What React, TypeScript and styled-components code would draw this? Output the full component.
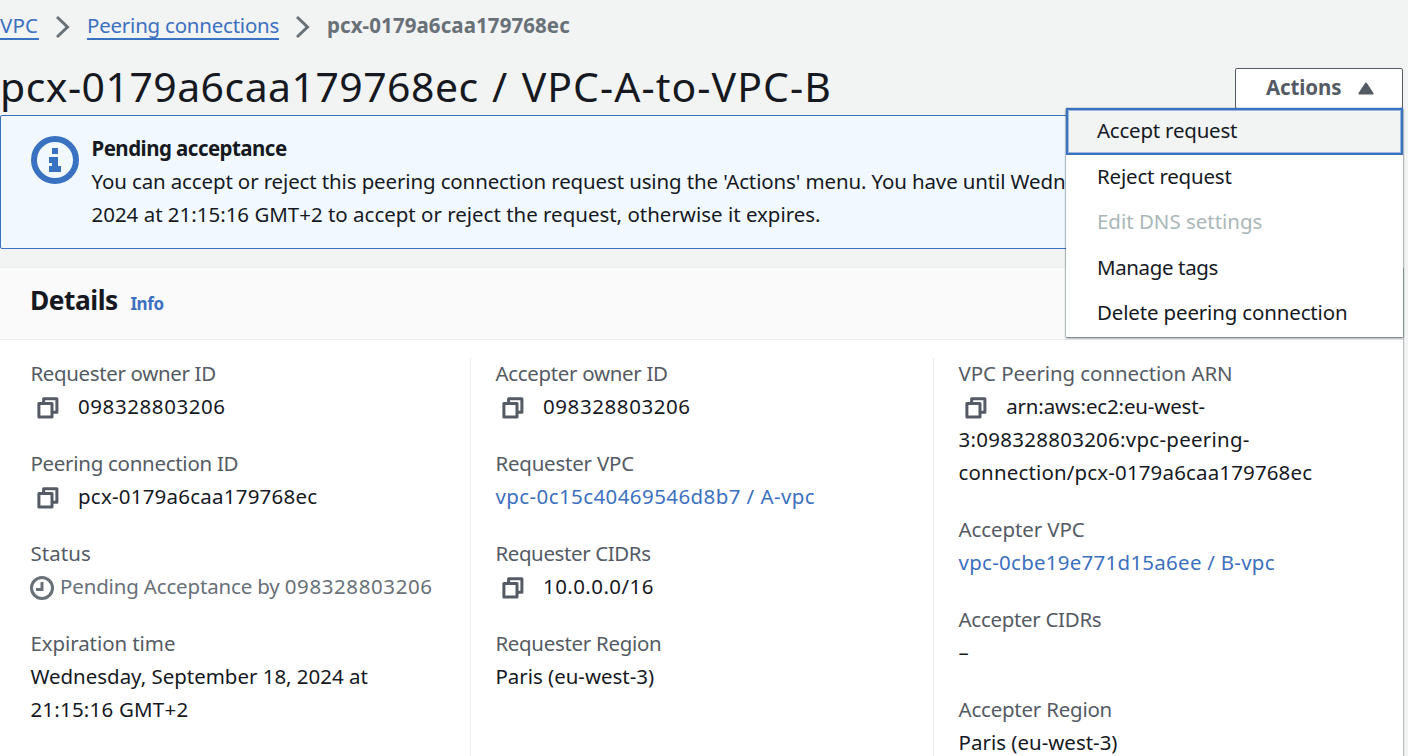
import React from 'react';
import styled, { createGlobalStyle } from 'styled-components';

const Global = createGlobalStyle`
  *, *::before, *::after { box-sizing: border-box; }
  body {
    margin: 0;
    background: #f2f3f3;
    color: #16191f;
    font-family: "Noto Sans", sans-serif;
    font-size: 20.475px;
    line-height: 33px;
    overflow: hidden;
  }
`;

const Page = styled.main`
  display: flex;
  flex-direction: column;
  width: 1408px;
  height: 756px;
  overflow: hidden;
`;

const Text = styled.span<{ $track?: number; $gap?: number }>`
  letter-spacing: ${(p) => p.$track ?? 0}px;
  word-spacing: ${(p) => p.$gap ?? 0}px;
  white-space: pre;
`;

const Breadcrumbs = styled.nav`
  display: flex;
  flex: none;
  align-items: flex-start;
  height: 68px;
  padding-top: 14px;
  line-height: 22px;
`;

const Crumb = styled.a<{ $track: number; $width: number }>`
  width: ${(p) => p.$width}px;
  padding-bottom: 2px;
  border-bottom: 2px solid #3972c0;
  color: #3c70c0;
  letter-spacing: ${(p) => p.$track}px;
  white-space: nowrap;
`;

const CurrentCrumb = styled(Text)`
  color: #687078;
  font-weight: 700;
`;

const ChevronSlot = styled.svg`
  width: 14px;
  height: 24px;
  margin: 1px 17px 0 17px;
  fill: none;
  stroke: #687078;
  stroke-width: 3;
`;

const TitleBar = styled.header`
  display: flex;
  flex: none;
  justify-content: space-between;
  width: 1403px;
  height: 47px;
`;

const Title = styled.h1`
  margin: 0;
  font-size: 40.95px;
  font-weight: 400;
  line-height: 36px;
  white-space: nowrap;
`;

const Actions = styled.div`
  position: relative;
  width: 168px;
`;

const ActionsButton = styled.button`
  display: flex;
  align-items: center;
  width: 168px;
  height: 41px;
  padding: 0 0 3px 30px;
  border: 1px solid #545b64;
  border-radius: 2px;
  background: #fff;
  color: #545b64;
  font: 700 20.475px/33px "Noto Sans", sans-serif;
`;

const Caret = styled.svg`
  width: 16px;
  height: 13px;
  margin: 3px 0 0 17px;
  fill: #545b64;
  stroke: #545b64;
  stroke-width: 2;
  stroke-linejoin: round;
`;

const Menu = styled.ul`
  position: absolute;
  z-index: 2;
  top: 40px;
  right: 0;
  width: 337px;
  height: 229px;
  margin: 0;
  padding: 0;
  list-style: none;
  background: #fff;
  box-shadow: 0 1px 2px 0 rgba(0, 28, 36, 0.65), 0 0 1px 0 rgba(0, 28, 36, 0.5);
`;

const MenuItem = styled.li<{ $active?: boolean; $disabled?: boolean; $track: number }>`
  height: ${(p) => (p.$active ? 46.75 : 45.5)}px;
  padding: ${(p) => (p.$active ? '4px 0 0 29px' : '5px 0 0 31px')};
  border: ${(p) => (p.$active ? '2px solid #3972c0' : '0')};
  box-shadow: ${(p) => (p.$active ? 'inset 0 0 0 1px #9db8de' : 'none')};
  background: ${(p) => (p.$active ? '#f2f3f3' : 'transparent')};
  color: ${(p) => (p.$disabled ? '#aab7b8' : '#16191f')};
  letter-spacing: ${(p) => p.$track}px;
  white-space: nowrap;
`;

const Banner = styled.section`
  display: flex;
  flex: none;
  width: 1403px;
  height: 134px;
  padding: 16px 0 0 30px;
  border: 1px solid #3972c0;
  border-radius: 2px;
  background: #f1f9ff;
`;

const InfoIcon = styled.svg`
  flex: none;
  width: 48px;
  height: 48px;
  margin: 4px 12.5px 0 0;
`;

const BannerText = styled.div`
  display: flex;
  flex-direction: column;
`;

const BannerTitle = styled(Text)`
  font-weight: 700;
`;

const Panel = styled.section`
  display: flex;
  flex: 1;
  flex-direction: column;
  width: 1403px;
  margin-top: 18px;
  background: #fff;
  border-top: 1px solid #eaeded;
  box-shadow: 0 1px 1px 0 rgba(0, 28, 36, 0.3), 1px 1px 1px 0 rgba(0, 28, 36, 0.2);
`;

const PanelHeader = styled.header`
  display: flex;
  align-items: baseline;
  gap: 12.5px;
  height: 72px;
  padding: 14.5px 30px 0;
  border-bottom: 1px solid #eaeded;
  background: #fafafa;
`;

const PanelTitle = styled.h2`
  margin: 0;
  font-size: 26.3px;
  font-weight: 700;
  line-height: 35px;
  letter-spacing: -0.45px;
`;

const InfoLink = styled.a`
  color: #3c70c0;
  font-size: 17px;
  font-weight: 700;
  letter-spacing: -0.4px;
`;

const Columns = styled.div`
  display: grid;
  grid-template-columns: 440px 463px 1fr;
  flex: 1;
  padding: 18px 0 0 30px;
`;

const Column = styled.dl<{ $inset: number }>`
  display: flex;
  flex-direction: column;
  gap: 24px;
  margin: 0;
  padding-left: ${(p) => p.$inset}px;
  border-left: ${(p) => (p.$inset > 1 ? '1px solid #eaeded' : '0')};
`;

const Field = styled.div`
  margin: -1px 0 1px;
`;

const Label = styled.dt<{ $track: number }>`
  color: #545b64;
  letter-spacing: ${(p) => p.$track}px;
  white-space: nowrap;
`;

const Value = styled.dd<{ $tone?: 'link' | 'muted' }>`
  display: flex;
  flex-direction: column;
  margin: 0;
  color: ${(p) => (p.$tone === 'link' ? '#3c70c0' : p.$tone === 'muted' ? '#687078' : '#16191f')};
`;

const Row = styled.div`
  display: flex;
  align-items: flex-start;
  height: 33px;
`;

const CopySvg = styled.svg`
  flex: none;
  width: 24px;
  height: 24px;
  margin: 6px 18px 0 5.6px;
  fill: none;
  stroke: #545b64;
  stroke-width: 3;
  stroke-linejoin: round;
`;

const ClockSvg = styled.svg`
  flex: none;
  width: 24px;
  height: 24px;
  margin: 6px 6px 0 -0.4px;
  fill: none;
  stroke: #687078;
  stroke-width: 3;
`;

const Chevron = () => (
  <ChevronSlot viewBox="0 0 14 24">
    <path d="M1 2 L11.5 12 L1 22" />
  </ChevronSlot>
);

const CopyIcon = () => (
  <CopySvg viewBox="0 0 24 24">
    <path d="M2.9 7.6h13.1v13.4h-13.1z" />
    <path d="M7.6 7V2.8h13.3v13.4H17" />
  </CopySvg>
);

const ClockIcon = () => (
  <ClockSvg viewBox="0 0 24 24">
    <circle cx="12" cy="12" r="10.5" />
    <path d="M12 6v7.5H6" />
  </ClockSvg>
);

type Segment = [text: string, track: number];

interface FieldData {
  label: Segment;
  lines: Segment[][];
  icon?: 'copy' | 'clock';
  tone?: 'link' | 'muted';
}

const columnInsets = [0.4, 24.4, 24.6];

const columns: FieldData[][] = [
  [
    { label: ['Requester owner ID', -0.338], icon: 'copy', lines: [[['098328803206', 0.6]]] },
    { label: ['Peering connection ID', -0.27], icon: 'copy', lines: [[['pcx-0179a6caa179768ec', 0.24]]] },
    {
      label: ['Status', 0.1],
      icon: 'clock',
      tone: 'muted',
      lines: [[['Pending Acceptance by ', -0.15], ['098328803206', 0.62]]],
    },
    {
      label: ['Expiration time', -0.067],
      lines: [[['Wednesday, September 18, 2024 at', -0.015]], [['21:15:16 GMT+2', 0.223]]],
    },
  ],
  [
    { label: ['Accepter owner ID', -0.303], icon: 'copy', lines: [[['098328803206', 0.6]]] },
    { label: ['Requester VPC', -0.2], tone: 'link', lines: [[['vpc-0c15c40469546d8b7 / A-vpc', 0.43]]] },
    { label: ['Requester CIDRs', -0.38], icon: 'copy', lines: [[['10.0.0.0/16', 0.44]]] },
    { label: ['Requester Region', -0.3], lines: [[['Paris (eu-west-3)', -0.01]]] },
  ],
  [
    {
      label: ['VPC Peering connection ARN', -0.076],
      icon: 'copy',
      lines: [
        [['arn:aws:ec2:eu-west-', -0.15]],
        [['3:098328803206:vpc-peering-', 0.27]],
        [['connection/pcx-0179a6caa179768ec', 0.16]],
      ],
    },
    { label: ['Accepter VPC', -0.1], tone: 'link', lines: [[['vpc-0cbe19e771d15a6ee / B-vpc', 0.27]]] },
    { label: ['Accepter CIDRs', -0.3], lines: [[['–', 0]]] },
    { label: ['Accepter Region', -0.221], lines: [[['Paris (eu-west-3)', 0]]] },
  ],
];

export default function App() {
  return (
    <Page>
      <Global />
      <Breadcrumbs>
        <Crumb $width={39} $track={0.168}>VPC</Crumb>
        <Chevron />
        <Crumb $width={192} $track={-0.214}>Peering connections</Crumb>
        <Chevron />
        <CurrentCrumb $track={0.098}>pcx-0179a6caa179768ec</CurrentCrumb>
      </Breadcrumbs>
      <TitleBar>
        <Title>
          <Text $track={0.48}>pcx-0179a6caa179768ec</Text>
          <Text $track={1.05} $gap={1.7}> / VPC-A-to-VPC-B</Text>
        </Title>
        <Actions>
          <ActionsButton>
            <Text $track={-0.1}>Actions</Text>
            <Caret viewBox="0 0 16 13">
              <path d="M8 1.5 L14.6 11.5 H1.4 Z" />
            </Caret>
          </ActionsButton>
          <Menu>
            <MenuItem $active $track={-0.211}>Accept request</MenuItem>
            <MenuItem $track={-0.178}>Reject request</MenuItem>
            <MenuItem $disabled $track={-0.01}>Edit DNS settings</MenuItem>
            <MenuItem $track={-0.36}>Manage tags</MenuItem>
            <MenuItem $track={-0.145}>Delete peering connection</MenuItem>
          </Menu>
        </Actions>
      </TitleBar>
      <Banner>
        <InfoIcon viewBox="0 0 48 48">
          <circle cx="24" cy="24" r="21" fill="none" stroke="#3972c0" strokeWidth="6" />
          <path d="M21 12h6v6h-6z M18 21h9v9h3v6H18v-6h3v-3h-3z" fill="#3972c0" />
        </InfoIcon>
        <BannerText>
          <BannerTitle $track={-0.53}>Pending acceptance</BannerTitle>
          <Text $track={-0.12}>
            You can accept or reject this peering connection request using the 'Actions' menu. You have until Wedn
          </Text>
          <Text $track={0}>2024 at 21:15:16 GMT+2 to accept or reject the request, otherwise it expires.</Text>
        </BannerText>
      </Banner>
      <Panel>
        <PanelHeader>
          <PanelTitle>Details</PanelTitle>
          <InfoLink>Info</InfoLink>
        </PanelHeader>
        <Columns>
          {columns.map((fields, c) => (
            <Column key={c} $inset={columnInsets[c]}>
              {fields.map((f) => (
                <Field key={f.label[0]}>
                  <Label $track={f.label[1]}>{f.label[0]}</Label>
                  <Value $tone={f.tone}>
                    {f.lines.map((segments, i) => (
                      <Row key={i}>
                        {i === 0 && f.icon === 'copy' && <CopyIcon />}
                        {i === 0 && f.icon === 'clock' && <ClockIcon />}
                        {segments.map(([text, track]) => (
                          <Text key={text} $track={track}>{text}</Text>
                        ))}
                      </Row>
                    ))}
                  </Value>
                </Field>
              ))}
            </Column>
          ))}
        </Columns>
      </Panel>
    </Page>
  );
}
